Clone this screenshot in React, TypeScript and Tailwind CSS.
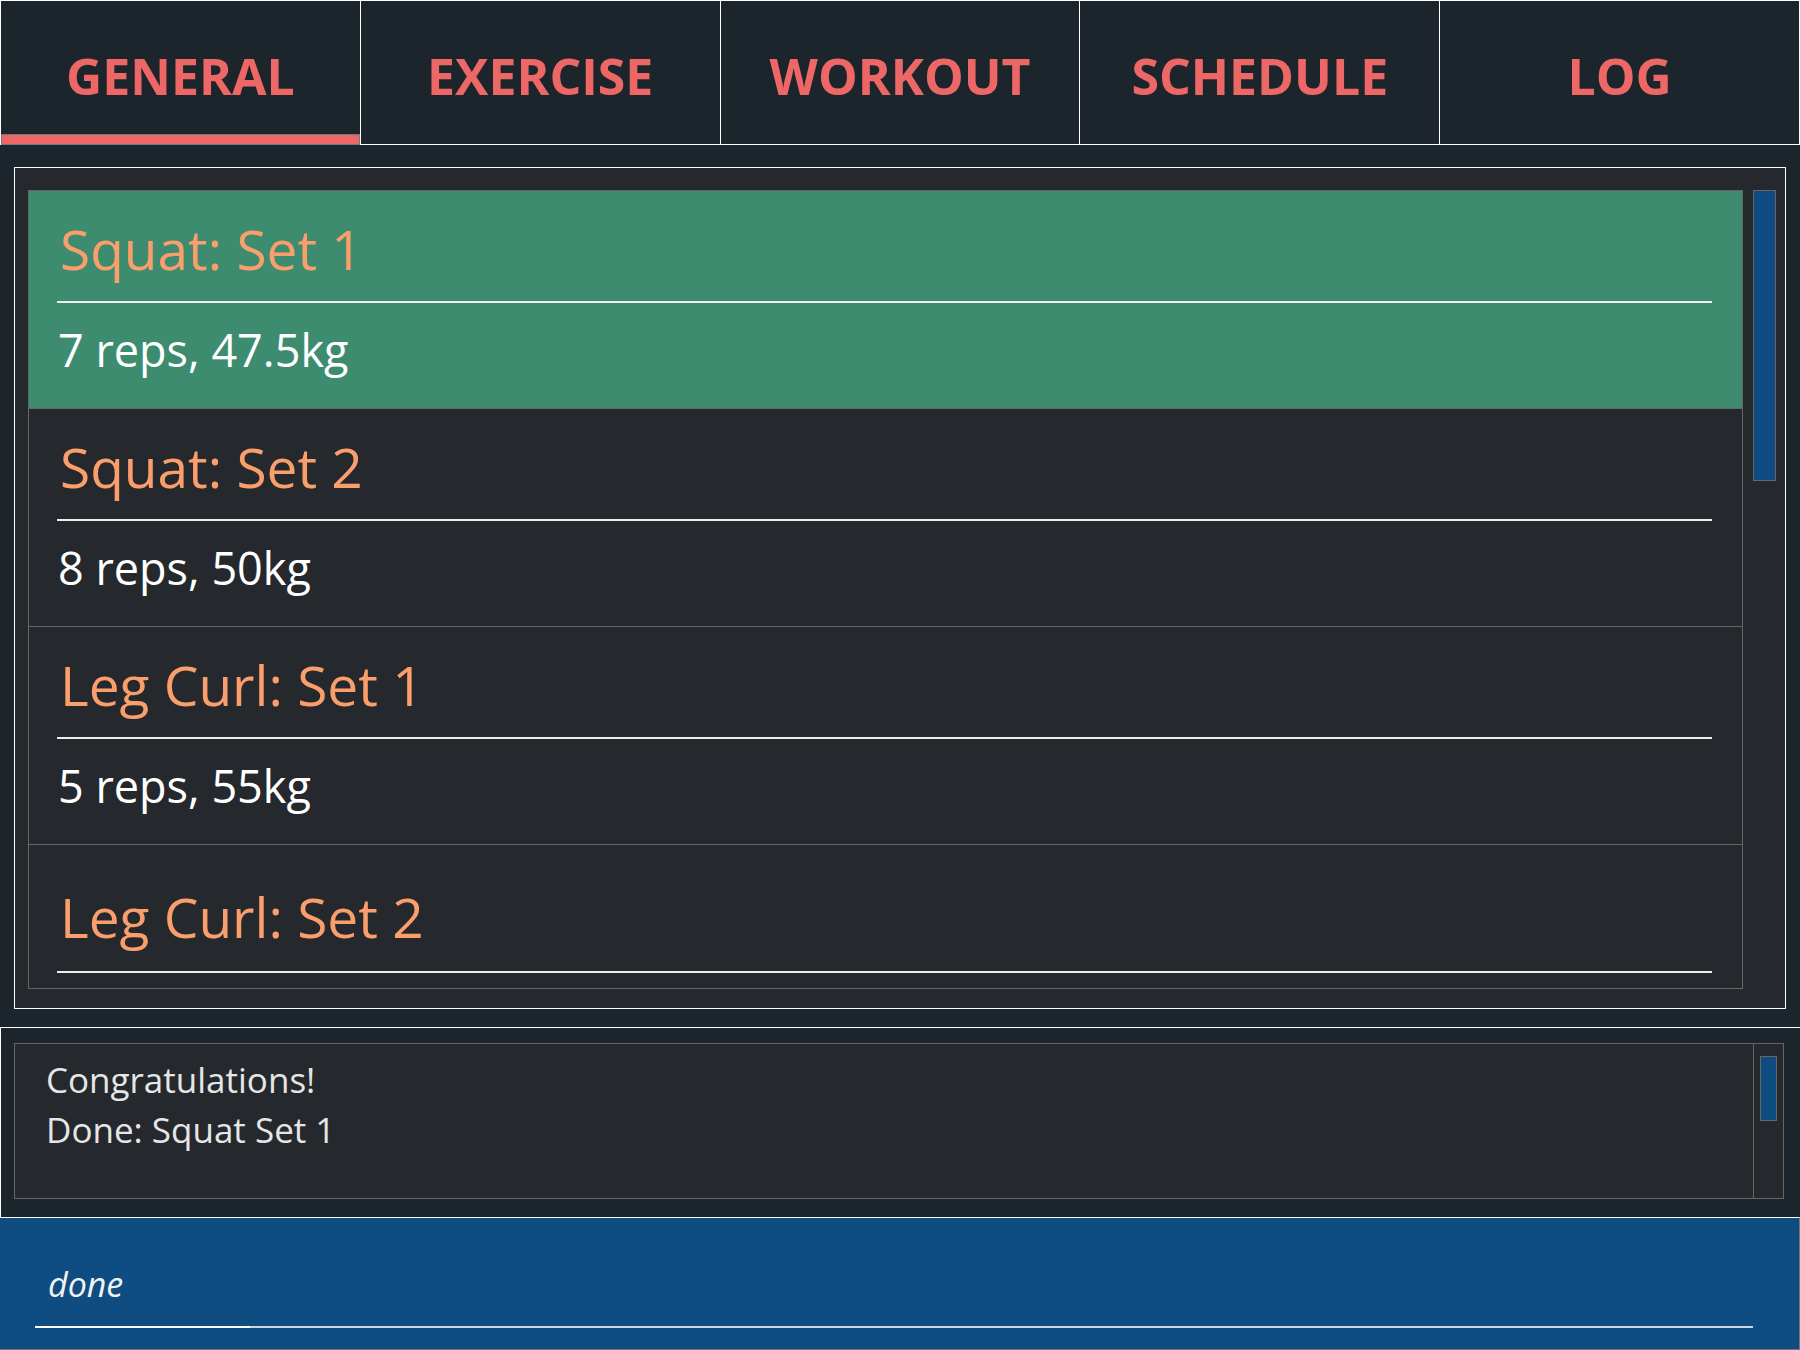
import React from "react";

// ── Datos ─────────────────────────────────────────────────────────────────────

const tabs = ["GENERAL", "EXERCISE", "WORKOUT", "SCHEDULE", "LOG"];

const sets = [
  { title: "Squat: Set 1", detail: "7 reps, 47.5kg", done: true },
  { title: "Squat: Set 2", detail: "8 reps, 50kg" },
  { title: "Leg Curl: Set 1", detail: "5 reps, 55kg" },
  { title: "Leg Curl: Set 2", detail: "", last: true },
];

// ── App ───────────────────────────────────────────────────────────────────────

export default function App() {
  return (
    <div className="w-[1800px] h-[1350px] bg-[#1c252b] flex flex-col font-['Open_Sans',sans-serif] overflow-hidden">
      {/* Tabs */}
      <nav className="flex h-[145px] shrink-0">
        {tabs.map((t, i) => (
          <div
            key={t}
            className={`relative flex-1 flex items-center justify-center pt-[6px] border-t border-r border-white ${
              i === 0 ? "border-l" : "border-b"
            }`}
          >
            <span className="text-[50px] leading-none font-bold text-[#ee6767]">{t}</span>
            {i === 0 && (
              <div className="absolute left-0 right-0 bottom-0 h-[11px] bg-[#ee6767] border border-[#777]" />
            )}
          </div>
        ))}
      </nav>

      {/* Lista de sets */}
      <section className="mt-[22px] mx-[14px] h-[842px] shrink-0 border border-white bg-[#25292d] flex pt-[22px] pl-[13px] pr-[9px] pb-[19px] gap-[10px]">
        <div className="flex-1 border border-[#666] overflow-hidden">
          {sets.map((s) => (
            <SetRow key={s.title} {...s} />
          ))}
        </div>
        <div className="w-[23px] h-[291px] bg-[#0f4c81] border border-[#666]" />
      </section>

      {/* Mensajes */}
      <section className="mt-[18px] h-[190px] shrink-0 border-t border-l border-white pt-[15px] pl-[13px] pr-[16px]">
        <div className="h-[156px] border border-[#666] bg-[#25292d] flex">
          <div className="flex-1 pl-[31px] pt-[11px] text-[35px] leading-[50px] text-[#e6e6e6]">
            <p>Congratulations!</p>
            <p>Done: Squat Set 1</p>
          </div>
          <div className="w-[30px] border-l border-[#666] pt-[12px] pl-[6px]">
            <div className="w-[17px] h-[65px] bg-[#0f4c81] border border-[#666]" />
          </div>
        </div>
      </section>

      {/* Entrada */}
      <section className="flex-1 bg-[#0f4c81] border-t border-white border-r border-b border-r-[#777] border-b-[#777] pl-[35px] pr-[46px] pt-[41px]">
        <p className="pl-[13px] text-[34px] leading-[50px] italic text-[#f2f2f2]">done</p>
        <div className="mt-[17px] h-[2px] flex">
          <div className="w-[215px] bg-white" />
          <div className="flex-1 bg-[#c9d6e4]" />
        </div>
      </section>
    </div>
  );
}

// ── SetRow ────────────────────────────────────────────────────────────────────

function SetRow({ title, detail, done, last }: { title: string; detail: string; done?: boolean; last?: boolean }) {
  return (
    <div
      className={`h-[218px] border-b border-[#666] pl-[28px] pr-[30px] ${done ? "bg-[#3d8c6f]" : ""} ${
        last ? "pt-[40px]" : "pt-[26px]"
      }`}
    >
      <p className="pl-[3px] text-[55px] leading-[64px] text-[#fa9e6c] whitespace-nowrap">{title}</p>
      <div className={`${last ? "mt-[22px]" : "mt-[20px]"} h-[2px] bg-[#eeeeee]`} />
      {detail && (
        <p className="pl-[1px] mt-[19px] text-[45px] leading-[56px] text-white whitespace-nowrap">{detail}</p>
      )}
    </div>
  );
}
